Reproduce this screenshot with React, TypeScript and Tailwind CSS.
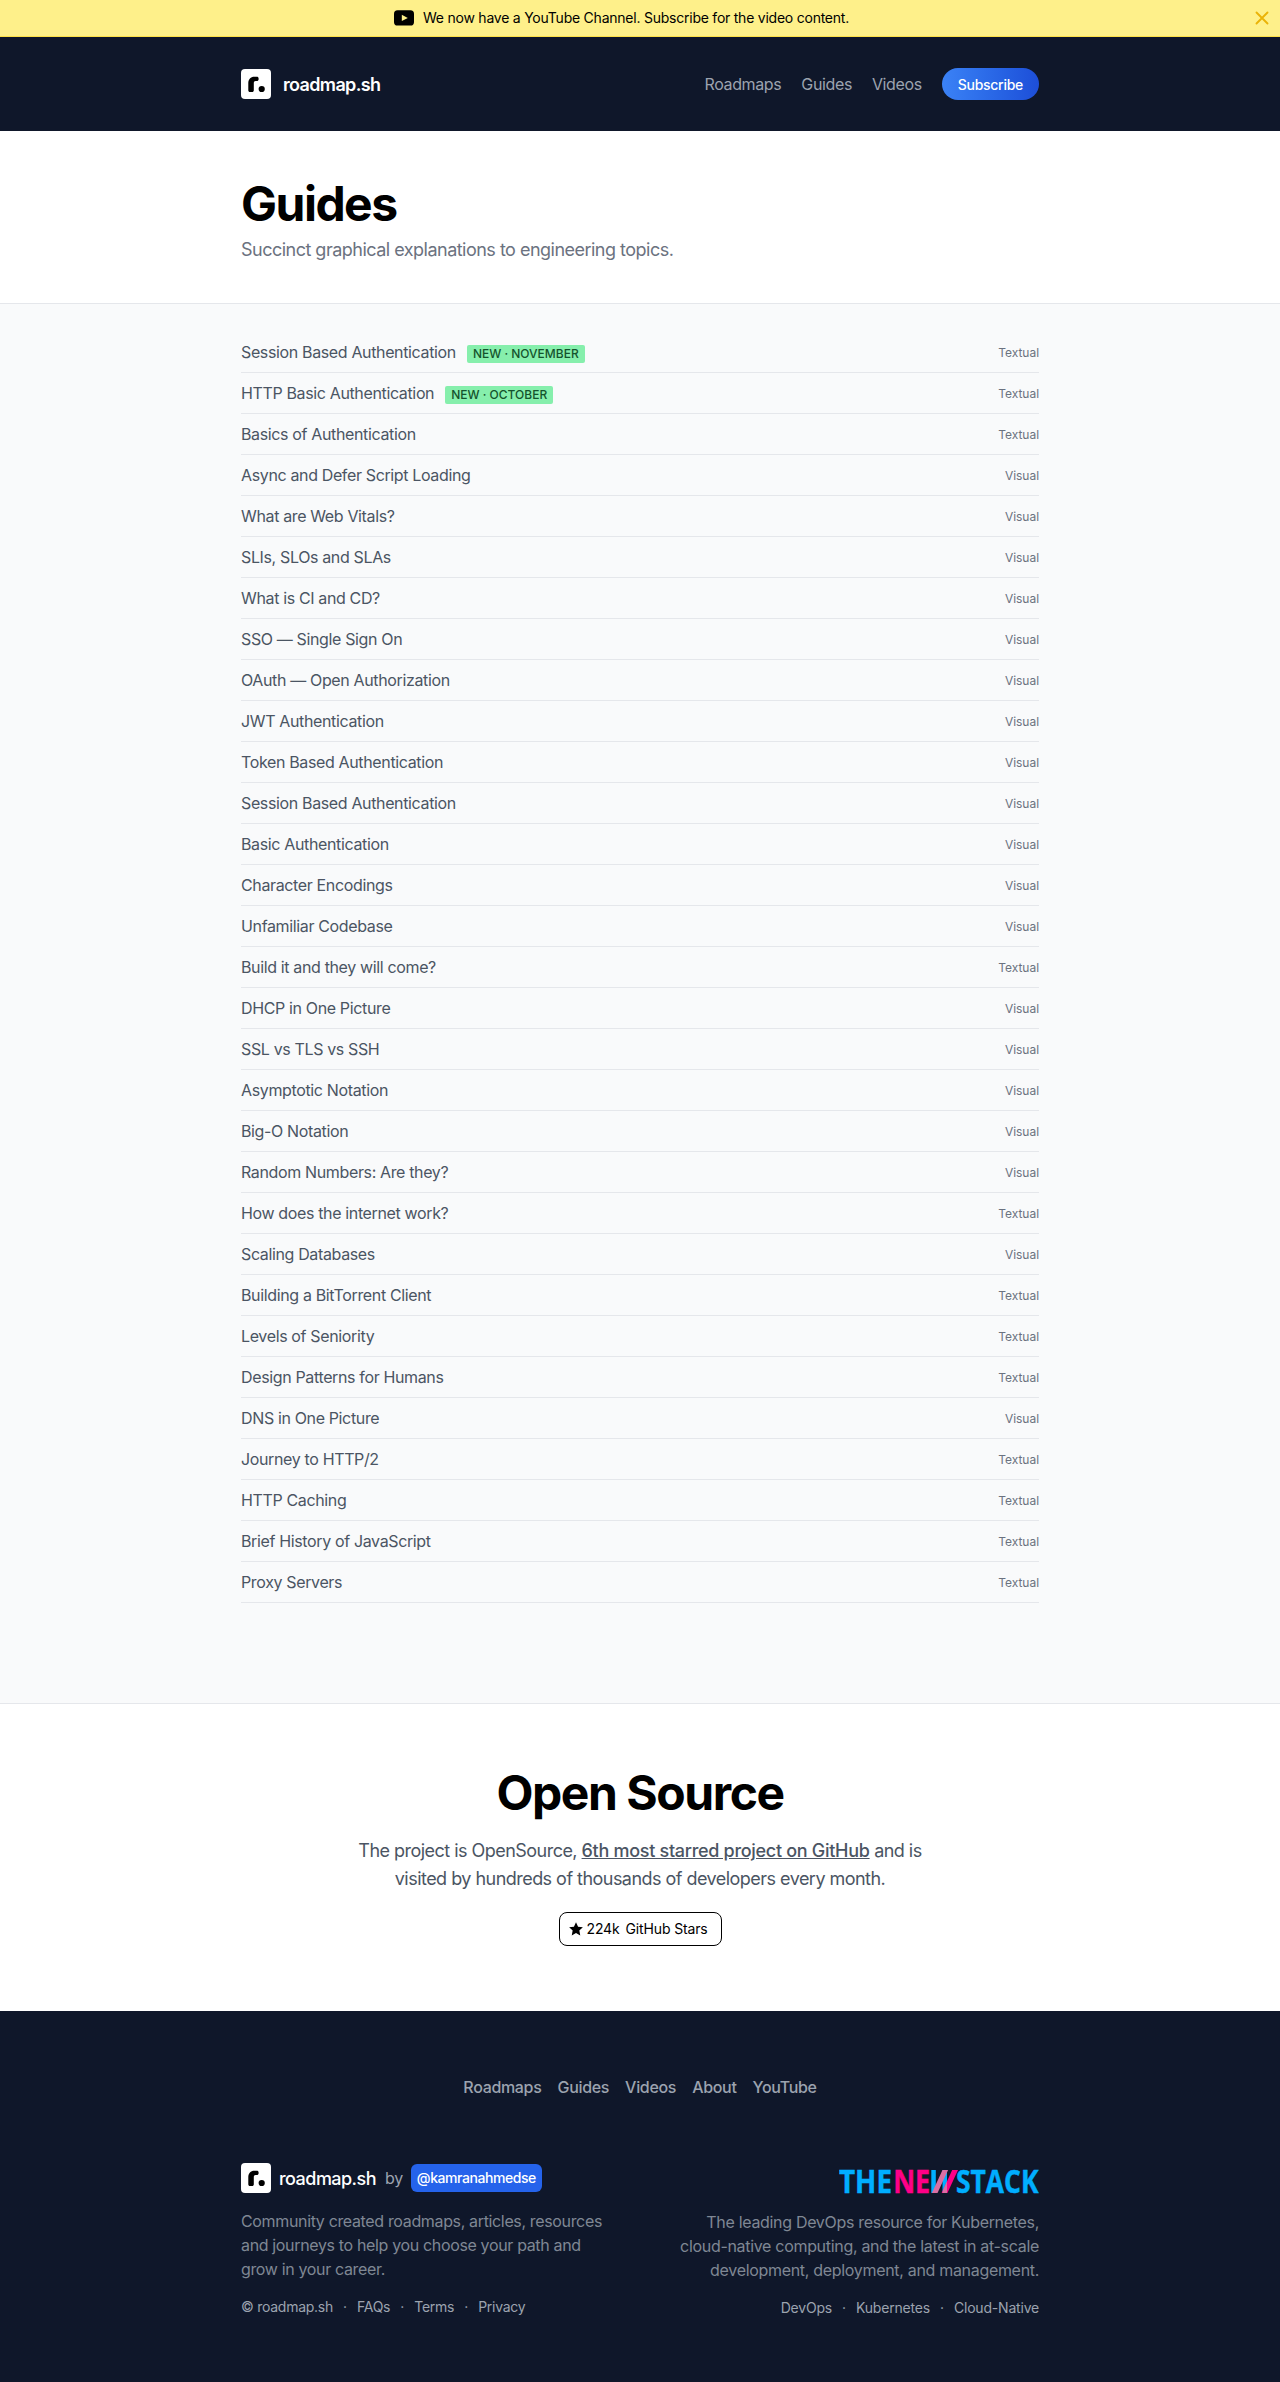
import { Fragment } from "react";

type Guide = { title: string; type: "Textual" | "Visual"; badge?: string };

const guides: Guide[] = [
  { title: "Session Based Authentication", type: "Textual", badge: "New · November" },
  { title: "HTTP Basic Authentication", type: "Textual", badge: "New · October" },
  { title: "Basics of Authentication", type: "Textual" },
  { title: "Async and Defer Script Loading", type: "Visual" },
  { title: "What are Web Vitals?", type: "Visual" },
  { title: "SLIs, SLOs and SLAs", type: "Visual" },
  { title: "What is CI and CD?", type: "Visual" },
  { title: "SSO — Single Sign On", type: "Visual" },
  { title: "OAuth — Open Authorization", type: "Visual" },
  { title: "JWT Authentication", type: "Visual" },
  { title: "Token Based Authentication", type: "Visual" },
  { title: "Session Based Authentication", type: "Visual" },
  { title: "Basic Authentication", type: "Visual" },
  { title: "Character Encodings", type: "Visual" },
  { title: "Unfamiliar Codebase", type: "Visual" },
  { title: "Build it and they will come?", type: "Textual" },
  { title: "DHCP in One Picture", type: "Visual" },
  { title: "SSL vs TLS vs SSH", type: "Visual" },
  { title: "Asymptotic Notation", type: "Visual" },
  { title: "Big-O Notation", type: "Visual" },
  { title: "Random Numbers: Are they?", type: "Visual" },
  { title: "How does the internet work?", type: "Textual" },
  { title: "Scaling Databases", type: "Visual" },
  { title: "Building a BitTorrent Client", type: "Textual" },
  { title: "Levels of Seniority", type: "Textual" },
  { title: "Design Patterns for Humans", type: "Textual" },
  { title: "DNS in One Picture", type: "Visual" },
  { title: "Journey to HTTP/2", type: "Textual" },
  { title: "HTTP Caching", type: "Textual" },
  { title: "Brief History of JavaScript", type: "Textual" },
  { title: "Proxy Servers", type: "Textual" },
];

function BrandMark() {
  return (
    <svg viewBox="0 0 30 30" className="size-[30px] shrink-0">
      <rect width="30" height="30" rx="4" fill="#fff" />
      <path
        d="M7.3 21.2V14c0-3.6 2.4-6.2 6-6.2h2.4c1.3 0 1.9.6 1.900 1.700v.8c0 1.200-.7 1.800-1.900 1.800h-1c-1.300 0-1.900.7-1.900 2v7.100c0 1.200-.6 1.800-1.800 1.800H9.100c-1.200 0-1.800-.6-1.800-1.800Z"
        fill="#000"
      />
      <circle cx="20.700" cy="20" r="3.100" fill="#000" />
    </svg>
  );
}

function NewStackLogo() {
  return (
    <svg
      viewBox="0 -12 210 50"
      className="-mt-3 -mr-[10px] -mb-3 h-[50px] w-[210px]"
      fontFamily="'Open Sans', sans-serif"
      fontWeight="700"
      fontSize="32.2"
      strokeWidth="0.500"
    >
      <clipPath id="stem">
        <rect x="103.500" y="1" width="4.500" height="23" />
      </clipPath>
      <text x="0" y="24" fill="#00aeff" stroke="#00aeff" textLength="53" lengthAdjust="spacingAndGlyphs">THE</text>
      <text x="54.200" y="24" fill="#ff0087" stroke="#ff0087" textLength="37" lengthAdjust="spacingAndGlyphs">NE</text>
      <g fill="#00aeff">
        <rect x="92.300" y="1" width="4.500" height="23" />
        <rect x="103.500" y="1" width="4.500" height="23" />
      </g>
      <rect width="5.600" height="23" transform="matrix(1 0 -.46 1 103.500 1)" fill="#da6fa3" />
      <rect width="5.800" height="23" transform="matrix(1 0 -.46 1 113.200 1)" fill="#ff0087" />
      <g clipPath="url(#stem)">
        <rect width="5.800" height="23" transform="matrix(1 0 -.46 1 113.200 1)" fill="#da6fa3" />
      </g>
      <text x="117" y="24" fill="#00aeff" stroke="#00aeff" textLength="82.500" lengthAdjust="spacingAndGlyphs">STACK</text>
    </svg>
  );
}

function DotLinks({ items, className }: { items: string[]; className: string }) {
  return (
    <p className={className}>
      {items.map((item, i) => (
        <Fragment key={item}>
          {i > 0 && <span className="w-6 text-center">·</span>}
          <a>{item}</a>
        </Fragment>
      ))}
    </p>
  );
}

export default function App() {
  return (
    <div className="bg-white font-['Inter',sans-serif] text-base text-black">
      <div className="relative flex h-[37px] items-center justify-center border-b border-[#fde047] bg-[#fef08a] pr-[37px] text-sm">
        <svg viewBox="0 0 20 16" className="mr-[9px] h-4 w-5">
          <rect y="0.300" width="20" height="15.200" rx="3.600" fill="#000" />
          <path d="M7.800 4.700v6.400l6-3.200Z" fill="#fef08a" />
        </svg>
        <span className="tracking-[-0.0168em]">
          We now have a YouTube Channel. Subscribe for the video content.
        </span>
        <svg
          viewBox="0 0 14 14"
          className="absolute top-[11px] right-[11px] size-[14px]"
          stroke="#eab308"
          strokeWidth="1.900"
          strokeLinecap="round"
        >
          <path d="M1.500 1.500l11 11M12.500 1.500l-11 11" />
        </svg>
      </div>

      <header className="h-[94px] bg-[#0f172a] text-white">
        <div className="mx-auto flex h-full w-[798px] items-center justify-between">
          <div className="flex items-center">
            <BrandMark />
            <span className="ml-3 pt-px text-lg leading-7 font-semibold tracking-[-0.036em]">roadmap.sh</span>
          </div>
          <nav className="flex items-center gap-5 tracking-[-0.0235em] text-[#9ca3af]">
            <a>Roadmaps</a>
            <a>Guides</a>
            <a>Videos</a>
            <a className="flex h-8 items-center rounded-full bg-linear-to-r from-[#3b82f6] to-[#1d4ed8] px-4 pt-px text-sm font-medium tracking-[-0.02em] text-white">
              Subscribe
            </a>
          </nav>
        </div>
      </header>

      <section className="h-[173px] border-b border-[#e5e7eb] pt-[49px]">
        <div className="mx-auto w-[798px]">
          <h1 className="text-5xl leading-[48px] font-bold tracking-[-0.0315em]">Guides</h1>
          <p className="mt-2 text-lg leading-7 tracking-[-0.0285em] text-[#6b7280]">
            Succinct graphical explanations to engineering topics.
          </p>
        </div>
      </section>

      <main className="h-[1400px] border-b border-[#e5e7eb] bg-[#f9fafb] pt-7">
        <ul className="mx-auto w-[798px]">
          {guides.map((guide, i) => (
            <li key={i} className="flex h-[41px] items-center justify-between border-b border-[#e5e7eb]">
              <span className="flex items-center tracking-[-0.0225em] text-[#4b5563]">
                {guide.title}
                {guide.badge && (
                  <span className="mt-[3px] ml-[11px] flex h-[18px] items-center rounded-xs bg-[#86efac] px-1.5 text-xs font-medium tracking-[0em] text-[#14532d] uppercase">
                    {guide.badge}
                  </span>
                )}
              </span>
              <span className="pt-px text-xs tracking-[-0.003em] text-[#6b7280]">{guide.type}</span>
            </li>
          ))}
        </ul>
      </main>

      <section className="flex h-[307px] flex-col items-center pt-[65px] text-center">
        <h2 className="text-5xl leading-[48px] font-bold tracking-[-0.03em]">Open Source</h2>
        <p className="mt-5 text-lg leading-7 tracking-[-0.0295em] text-[#4b5563]">
          The project is OpenSource,{" "}
          <a className="font-medium tracking-[-0.0164em] underline">6th most starred project on GitHub</a> and is
          <br />
          visited by hundreds of thousands of developers every month.
        </p>
        <a className="mt-[19px] flex h-[34px] w-[163px] items-center rounded-lg border border-black pl-2 text-sm tracking-[-0.01em]">
          <svg viewBox="0 0 24 24" className="mr-[3px] size-4" fill="#000">
            <path d="M12 1.800l3.100 6.700 7.200.9-5.300 5 1.400 7.200L12 18.100l-6.400 3.500L7 14.400l-5.300-5 7.200-.9Z" />
          </svg>
          <span className="mr-1.5">224k</span>
          <span>GitHub Stars</span>
        </a>
      </section>

      <footer className="h-[371px] bg-[#0f172a] pt-16 text-[#9ca3af]">
        <nav className="flex justify-center gap-4 font-medium tracking-[-0.02em]">
          <a>Roadmaps</a>
          <a>Guides</a>
          <a>Videos</a>
          <a>About</a>
          <a>YouTube</a>
        </nav>
        <div className="mx-auto mt-16 flex w-[798px] justify-between">
          <div>
            <div className="flex h-[30px] items-center">
              <BrandMark />
              <span className="ml-2 pt-px text-lg font-medium tracking-[-0.0297em] text-white">roadmap.sh</span>
              <span className="ml-[9px] tracking-[-0.02em]">by</span>
              <a className="ml-2 flex h-7 items-center rounded-md bg-[#2563eb] px-1.5 text-sm font-medium tracking-[-0.031em] text-white">
                @kamranahmedse
              </a>
            </div>
            <p className="mt-4 tracking-[-0.0218em] text-[#7f8794]">
              Community created roadmaps, articles, resources
              <br />
              and journeys to help you choose your path and
              <br />
              grow in your career.
            </p>
            <DotLinks items={["© roadmap.sh", "FAQs", "Terms", "Privacy"]} className="mt-4 flex text-sm tracking-[-0.0187em]" />
          </div>
          <div className="flex flex-col items-end text-right">
            <div className="mt-[6px]">
              <NewStackLogo />
            </div>
            <p className="mt-[15px] tracking-[-0.0195em] text-[#7f8794]">
              The leading DevOps resource for Kubernetes,
              <br />
              cloud-native computing, and the latest in at-scale
              <br />
              development, deployment, and management.
            </p>
            <DotLinks items={["DevOps", "Kubernetes", "Cloud-Native"]} className="mt-4 flex text-sm tracking-[-0.014em]" />
          </div>
        </div>
      </footer>
    </div>
  );
}
